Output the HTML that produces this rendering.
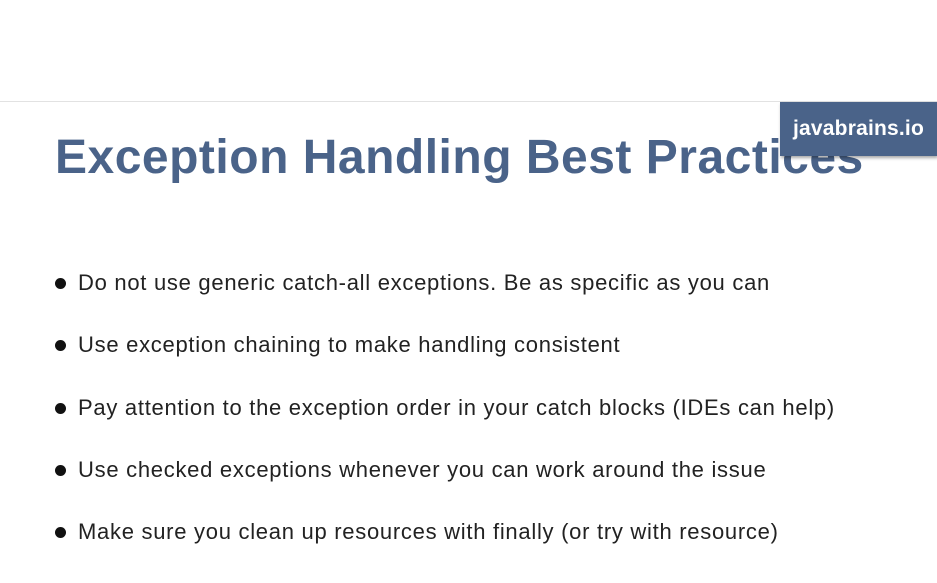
<!DOCTYPE html>
<html><head><style>
body{margin:0;width:937px;height:583px;background:#fff;position:relative;overflow:hidden;font-family:"Liberation Sans",sans-serif}
.line{position:absolute;left:0;top:101px;width:937px;height:1px;background:#e2e2e2}
.badge{position:absolute;left:780px;top:102px;width:157px;height:54px;background:#4a6389;color:#fff;font-weight:bold;font-size:21px;line-height:54px;text-align:center;letter-spacing:0.2px;box-shadow:1px 2px 3px rgba(0,0,0,.35);z-index:2}
h1{position:absolute;left:55px;top:130px;margin:0;font-size:48px;font-weight:bold;color:#4a6389;white-space:nowrap;letter-spacing:0.5px}
.b{position:absolute;left:55px;font-size:22px;color:#222;white-space:nowrap;line-height:24px;letter-spacing:0.72px}
.b:before{content:"";display:inline-block;width:11px;height:11px;border-radius:50%;background:#111;margin-right:12px;vertical-align:1px}
</style></head><body>
<div class="line"></div>
<div class="badge">javabrains.io</div>
<h1>Exception Handling Best Practices</h1>
<div class="b" style="top:271px">Do not use generic catch-all exceptions. Be as specific as you can</div>
<div class="b" style="top:333px">Use exception chaining to make handling consistent</div>
<div class="b" style="top:396px">Pay attention to the exception order in your catch blocks (IDEs can help)</div>
<div class="b" style="top:458px">Use checked exceptions whenever you can work around the issue</div>
<div class="b" style="top:520px">Make sure you clean up resources with finally (or try with resource)</div>
</body></html>
